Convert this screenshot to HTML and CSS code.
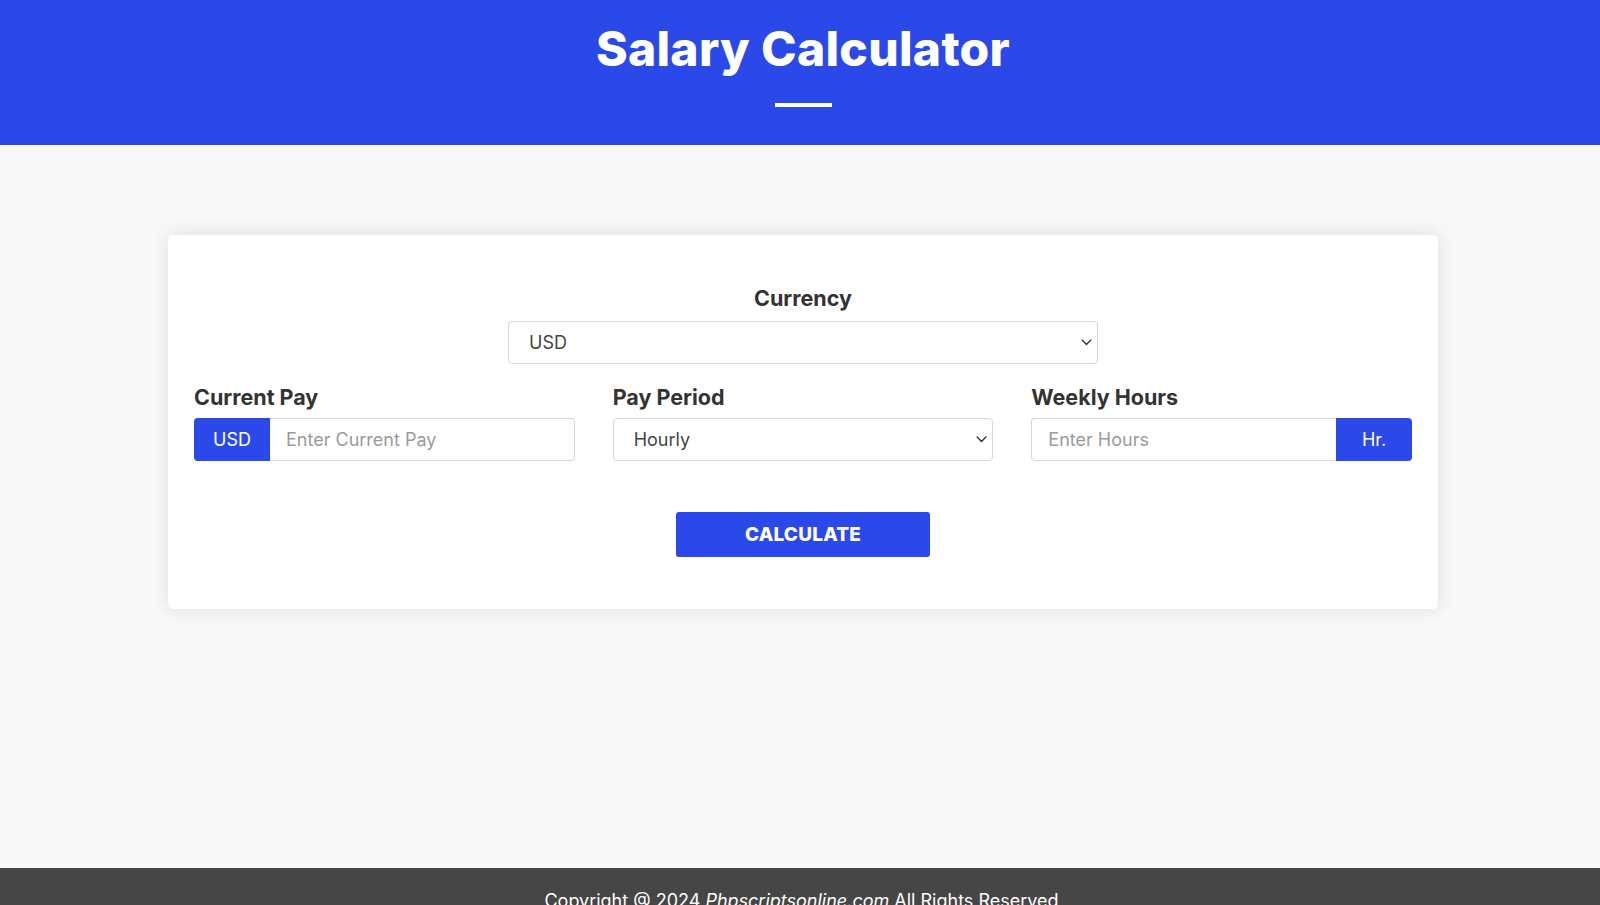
FILE: index.html
```html
<!DOCTYPE html>
<html lang="en">
<head>
<meta charset="utf-8">
<title>Salary Calculator</title>
<link rel="stylesheet" href="styles.css">
</head>
<body>
<header class="site-header">
  <h1 class="title">Salary Calculator</h1>
  <div class="title-bar"></div>
</header>
<main class="main">
  <section class="card">
    <div class="currency-group">
      <label class="label label-center">Currency</label>
      <div class="select-wrap">
        <div class="select">USD</div>
        <svg class="chev" viewBox="0 0 12 8" width="11" height="7"><path d="M1 1.2 6 6.2 11 1.2" fill="none" stroke="#333" stroke-width="1.6" stroke-linecap="round" stroke-linejoin="round"/></svg>
      </div>
    </div>
    <div class="fields">
      <div class="field">
        <label class="label">Current Pay</label>
        <div class="input-group">
          <span class="addon">USD</span>
          <div class="input placeholder grp-right">Enter Current Pay</div>
        </div>
      </div>
      <div class="field">
        <label class="label">Pay Period</label>
        <div class="select-wrap">
          <div class="select">Hourly</div>
          <svg class="chev" viewBox="0 0 12 8" width="11" height="7"><path d="M1 1.2 6 6.2 11 1.2" fill="none" stroke="#333" stroke-width="1.6" stroke-linecap="round" stroke-linejoin="round"/></svg>
        </div>
      </div>
      <div class="field">
        <label class="label">Weekly Hours</label>
        <div class="input-group">
          <div class="input placeholder grp-left">Enter Hours</div>
          <span class="addon addon-right">Hr.</span>
        </div>
      </div>
    </div>
    <div class="actions">
      <button class="btn">CALCULATE</button>
    </div>
  </section>
</main>
<footer class="site-footer">
  <p class="copy">Copyright @ 2024 <em>Phpscriptsonline.com</em> All Rights Reserved</p>
</footer>
</body>
</html>
```
FILE: styles.css
```css
* { box-sizing: border-box; }
html, body { margin: 0; padding: 0; }
body {
  background: #f8f8f8;
  font-family: Inter, "Open Sans", Arial, sans-serif;
  color: #333;
  overflow: hidden;
}
.site-header {
  background: #2b49e9;
  height: 145px;
  padding: 22px 0 0 6px;
  text-align: center;
}
.title {
  margin: 0;
  color: #fff;
  font-size: 48px;
  line-height: 54px;
  font-weight: 800;
  letter-spacing: 0.3px;
}
.title-bar {
  width: 57px;
  height: 4px;
  background: #fff;
  margin: 27px auto 0;
}
.main {
  height: 723px;
  padding: 90px 0 0 6px;
}
.card {
  width: 1270px;
  margin: 0 auto;
  background: #fff;
  border-radius: 5px;
  box-shadow: 0 0 20px rgba(0,0,0,0.11);
  padding: 50px 26px 52px;
}
.currency-group {
  width: 590px;
  margin: 0 auto;
}
.label {
  display: block;
  font-weight: 700;
  font-size: 21.5px;
  line-height: 26px;
  color: #333;
  margin-bottom: 9px;
}
.currency-group .label { margin-bottom: 10px; }
.label-center { text-align: center; }
.select-wrap { position: relative; }
.select {
  height: 43px;
  border: 1px solid #d6d6d6;
  border-radius: 4px;
  background: #fff;
  padding: 0 20px;
  font-size: 18px;
  line-height: 41px;
  color: #444;
}
.chev {
  position: absolute;
  right: 6px;
  top: 18px;
}
.fields {
  display: grid;
  grid-template-columns: repeat(3, 1fr);
  column-gap: 38px;
  margin-top: 20px;
}
.field .label { margin-bottom: 8px; }
.input-group { display: flex; height: 43px; }
.addon {
  flex: 0 0 76px;
  background: #2b49e9;
  color: #fff;
  font-size: 18px;
  line-height: 43px;
  text-align: center;
  border-radius: 4px 0 0 4px;
}
.addon-right { border-radius: 0 4px 4px 0; }
.input {
  flex: 1;
  border: 1px solid #d6d6d6;
  background: #fff;
  padding: 0 16px;
  font-size: 18px;
  line-height: 41px;
}
.grp-right { border-left: none; border-radius: 0 4px 4px 0; }
.grp-left { border-right: none; border-radius: 4px 0 0 4px; }
.placeholder { color: #9a9a9a; }
.actions {
  display: flex;
  justify-content: center;
  margin-top: 51px;
}
.btn {
  width: 254px;
  height: 45px;
  border: none;
  border-radius: 3px;
  background: #2b49e9;
  color: #fff;
  font-family: inherit;
  font-weight: 800;
  font-size: 19px;
  letter-spacing: 0.2px;
}
.site-footer {
  background: #464646;
  padding: 20px 0 20px 3px;
  text-align: center;
}
.copy {
  margin: 0;
  color: #fff;
  font-size: 18px;
  line-height: 26px;
}
```
